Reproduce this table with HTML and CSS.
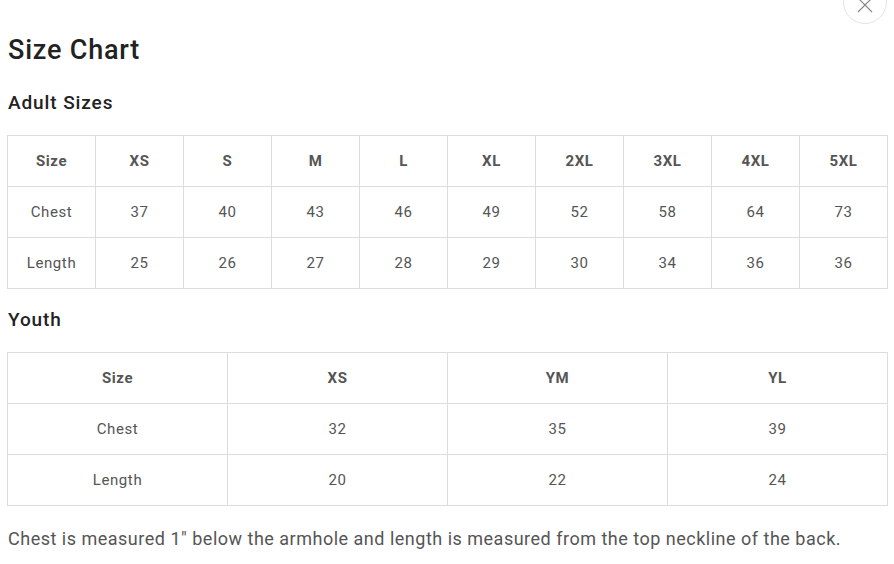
FILE: index.html
```html
<!DOCTYPE html>
<html>
<head>
<meta charset="utf-8">
<link rel="stylesheet" href="styles.css">
</head>
<body>
<div class="modal">
  <button class="close" aria-label="Close">
    <svg width="16" height="16" viewBox="0 0 16 16"><path d="M1 1L15 15M15 1L1 15" stroke="#888" stroke-width="1.2" fill="none"/></svg>
  </button>
  <h1 class="title">Size Chart</h1>
  <h2 class="section">Adult Sizes</h2>
  <table class="chart">
    <tr class="head"><td>Size</td><td>XS</td><td>S</td><td>M</td><td>L</td><td>XL</td><td>2XL</td><td>3XL</td><td>4XL</td><td>5XL</td></tr>
    <tr><td>Chest</td><td>37</td><td>40</td><td>43</td><td>46</td><td>49</td><td>52</td><td>58</td><td>64</td><td>73</td></tr>
    <tr><td>Length</td><td>25</td><td>26</td><td>27</td><td>28</td><td>29</td><td>30</td><td>34</td><td>36</td><td>36</td></tr>
  </table>
  <h2 class="section youth">Youth</h2>
  <table class="chart">
    <tr class="head"><td>Size</td><td>XS</td><td>YM</td><td>YL</td></tr>
    <tr><td>Chest</td><td>32</td><td>35</td><td>39</td></tr>
    <tr><td>Length</td><td>20</td><td>22</td><td>24</td></tr>
  </table>
  <p class="note">Chest is measured 1" below the armhole and length is measured from the top neckline of the back.</p>
</div>
</body>
</html>
```
FILE: styles.css
```css
html, body {
  margin: 0;
  padding: 0;
  background: #fff;
  font-family: Roboto, "Liberation Sans", sans-serif;
}
.modal {
  position: relative;
  padding: 0 7px 0 7px;
  width: 881px;
}
.close {
  position: absolute;
  left: 843px;
  top: -20px;
  width: 44px;
  height: 44px;
  border-radius: 50%;
  border: 1px solid #e4e4e4;
  background: #fff;
  display: flex;
  align-items: center;
  justify-content: center;
  padding: 0;
  padding-top: 6px;
}
.title {
  margin: 0;
  padding-top: 32px;
  font-size: 27px;
  font-weight: 500;
  color: #222;
  line-height: 36px;
  letter-spacing: 0.8px;
  padding-left: 1px;
}
.section {
  margin: 0;
  margin-top: 21px;
  font-size: 19px;
  font-weight: 500;
  color: #222;
  line-height: 28px;
  letter-spacing: 0.9px;
  padding-left: 1px;
}
.youth {
  margin-top: 17px;
}
.chart {
  width: 881px;
  border-collapse: collapse;
  table-layout: fixed;
  margin-top: 18px;
}
.chart td {
  border: 1px solid #dcdcdc;
  height: 50px;
  padding: 0;
  text-align: center;
  font-size: 15px;
  color: #555;
  letter-spacing: 0.6px;
}
.head td {
  font-weight: 700;
}
.note {
  margin: 0;
  margin-top: 19px;
  padding-left: 1px;
  font-size: 18px;
  color: #555;
  letter-spacing: 0.5px;
  line-height: 28px;
}
```
